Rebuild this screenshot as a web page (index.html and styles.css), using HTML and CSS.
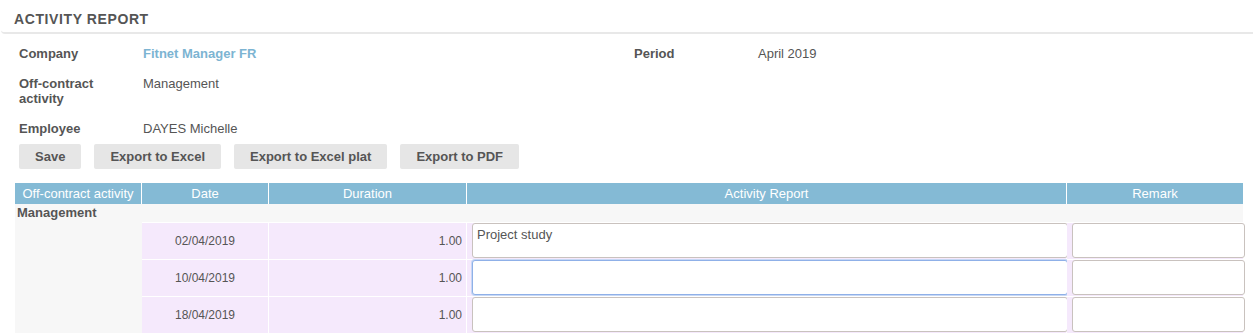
FILE: index.html
```html
<!DOCTYPE html>
<html lang="en">
<head>
    <meta charset="UTF-8">
    <meta name="viewport" content="width=device-width, initial-scale=1.0">
    <title>Activity Report</title>
    <link rel="stylesheet" href="styles.css">
</head>
<body>

<h1 class="title">ACTIVITY REPORT</h1>

<div class="info">
    <div class="label">Company</div>
    <div class="value link">Fitnet Manager FR</div>
    <div class="label">Period</div>
    <div class="value">April 2019</div>

    <div class="label">Off-contract activity</div>
    <div class="value">Management</div>
    <div></div>
    <div></div>

    <div class="label">Employee</div>
    <div class="value">DAYES Michelle</div>
    <div></div>
    <div></div>
</div>

<div class="buttons">
    <button class="btn">Save</button>
    <button class="btn">Export to Excel</button>
    <button class="btn">Export to Excel plat</button>
    <button class="btn">Export to PDF</button>
</div>

<table class="report">
    <colgroup>
        <col class="c-activity">
        <col class="c-date">
        <col class="c-duration">
        <col class="c-report">
        <col class="c-remark">
    </colgroup>
    <thead>
        <tr>
            <th>Off-contract activity</th>
            <th>Date</th>
            <th>Duration</th>
            <th>Activity Report</th>
            <th class="last">Remark</th>
        </tr>
    </thead>
    <tbody>
        <tr class="group">
            <td colspan="5">Management</td>
        </tr>
        <tr class="line">
            <td class="empty"></td>
            <td class="date">02/04/2019</td>
            <td class="duration">1.00</td>
            <td class="edit"><textarea>Project study</textarea></td>
            <td class="edit last"><textarea></textarea></td>
        </tr>
        <tr class="line">
            <td class="empty"></td>
            <td class="date">10/04/2019</td>
            <td class="duration">1.00</td>
            <td class="edit"><textarea class="focused"></textarea></td>
            <td class="edit last"><textarea></textarea></td>
        </tr>
        <tr class="line">
            <td class="empty"></td>
            <td class="date">18/04/2019</td>
            <td class="duration">1.00</td>
            <td class="edit"><textarea></textarea></td>
            <td class="edit last"><textarea></textarea></td>
        </tr>
    </tbody>
</table>

</body>
</html>
```

FILE: styles.css
```css
body {
    margin: 0;
    font-family: "Liberation Sans", Arial, sans-serif;
    font-size: 13px;
    color: #555;
    background-color: #fff;
}
.title {
    margin: 0 0 4px 1px;
    padding: 11px 0 5px 13px;
    font-size: 14px;
    line-height: 16px;
    letter-spacing: 0.6px;
    font-weight: bold;
    color: #555;
    border-bottom: 2px solid #e8e8e8;
    border-bottom-left-radius: 4px;
}
.info {
    display: grid;
    grid-template-columns: 124px 491px 124px 1fr;
    margin-left: 19px;
}
.info > div {
    padding: 8px 0 7px;
    line-height: 15px;
}
.label {
    font-weight: bold;
    padding-right: 20px !important;
}
.link {
    color: #7cb4d2;
    font-weight: bold;
}
.buttons {
    display: flex;
    gap: 13px;
    margin: 1px 0 0 19px;
}
.btn {
    height: 25px;
    padding: 0 16px;
    border: none;
    border-radius: 2px;
    background-color: #e6e6e6;
    font-family: "Liberation Sans", Arial, sans-serif;
    font-size: 13px;
    font-weight: bold;
    color: #555;
}
.report {
    margin: 14px 0 0 15px;
    width: 1228px;
    table-layout: fixed;
    border-collapse: separate;
    border-spacing: 0;
}
.c-activity { width: 127px; }
.c-date { width: 127px; }
.c-duration { width: 198px; }
.c-report { width: 600px; }
.c-remark { width: 176px; }
.report th {
    height: 21px;
    padding: 0;
    background-color: #84bad5;
    color: #fff;
    font-weight: normal;
    font-size: 13px;
    line-height: 21px;
    white-space: nowrap;
    overflow: hidden;
    border-right: 1px solid #fff;
}
.report th.last,
.report td.last {
    border-right: none;
}
.group td {
    height: 18px;
    padding: 0 2px;
    background-color: #f7f7f7;
    font-weight: bold;
    line-height: 18px;
}
.line td {
    height: 36px;
    padding: 0;
    border-top: 1px solid #fff;
    border-right: 1px solid #fff;
    background-color: #f5e9fc;
    font-size: 12px;
}
.line td.empty {
    background-color: #f7f7f7;
    border-top-color: #f7f7f7;
    border-right: 1px solid #f7f7f7;
}
.line td.date {
    text-align: center;
}
.line td.duration {
    text-align: right;
    padding-right: 4px;
}
.line td.edit {
    padding-left: 5px;
    vertical-align: top;
}
.edit textarea {
    display: block;
    box-sizing: border-box;
    width: calc(100% + 2px);
    height: 35px;
    margin: 0;
    padding: 3px 4px;
    border: 1px solid #c9c2be;
    border-radius: 3px;
    background-color: #fff;
    font-family: "Liberation Sans", Arial, sans-serif;
    font-size: 13px;
    color: #555;
    resize: none;
    outline: none;
}
.edit textarea.focused {
    border-color: #8fb0e8;
    box-shadow: 0 0 0 1px #c7d8f5;
}
```
